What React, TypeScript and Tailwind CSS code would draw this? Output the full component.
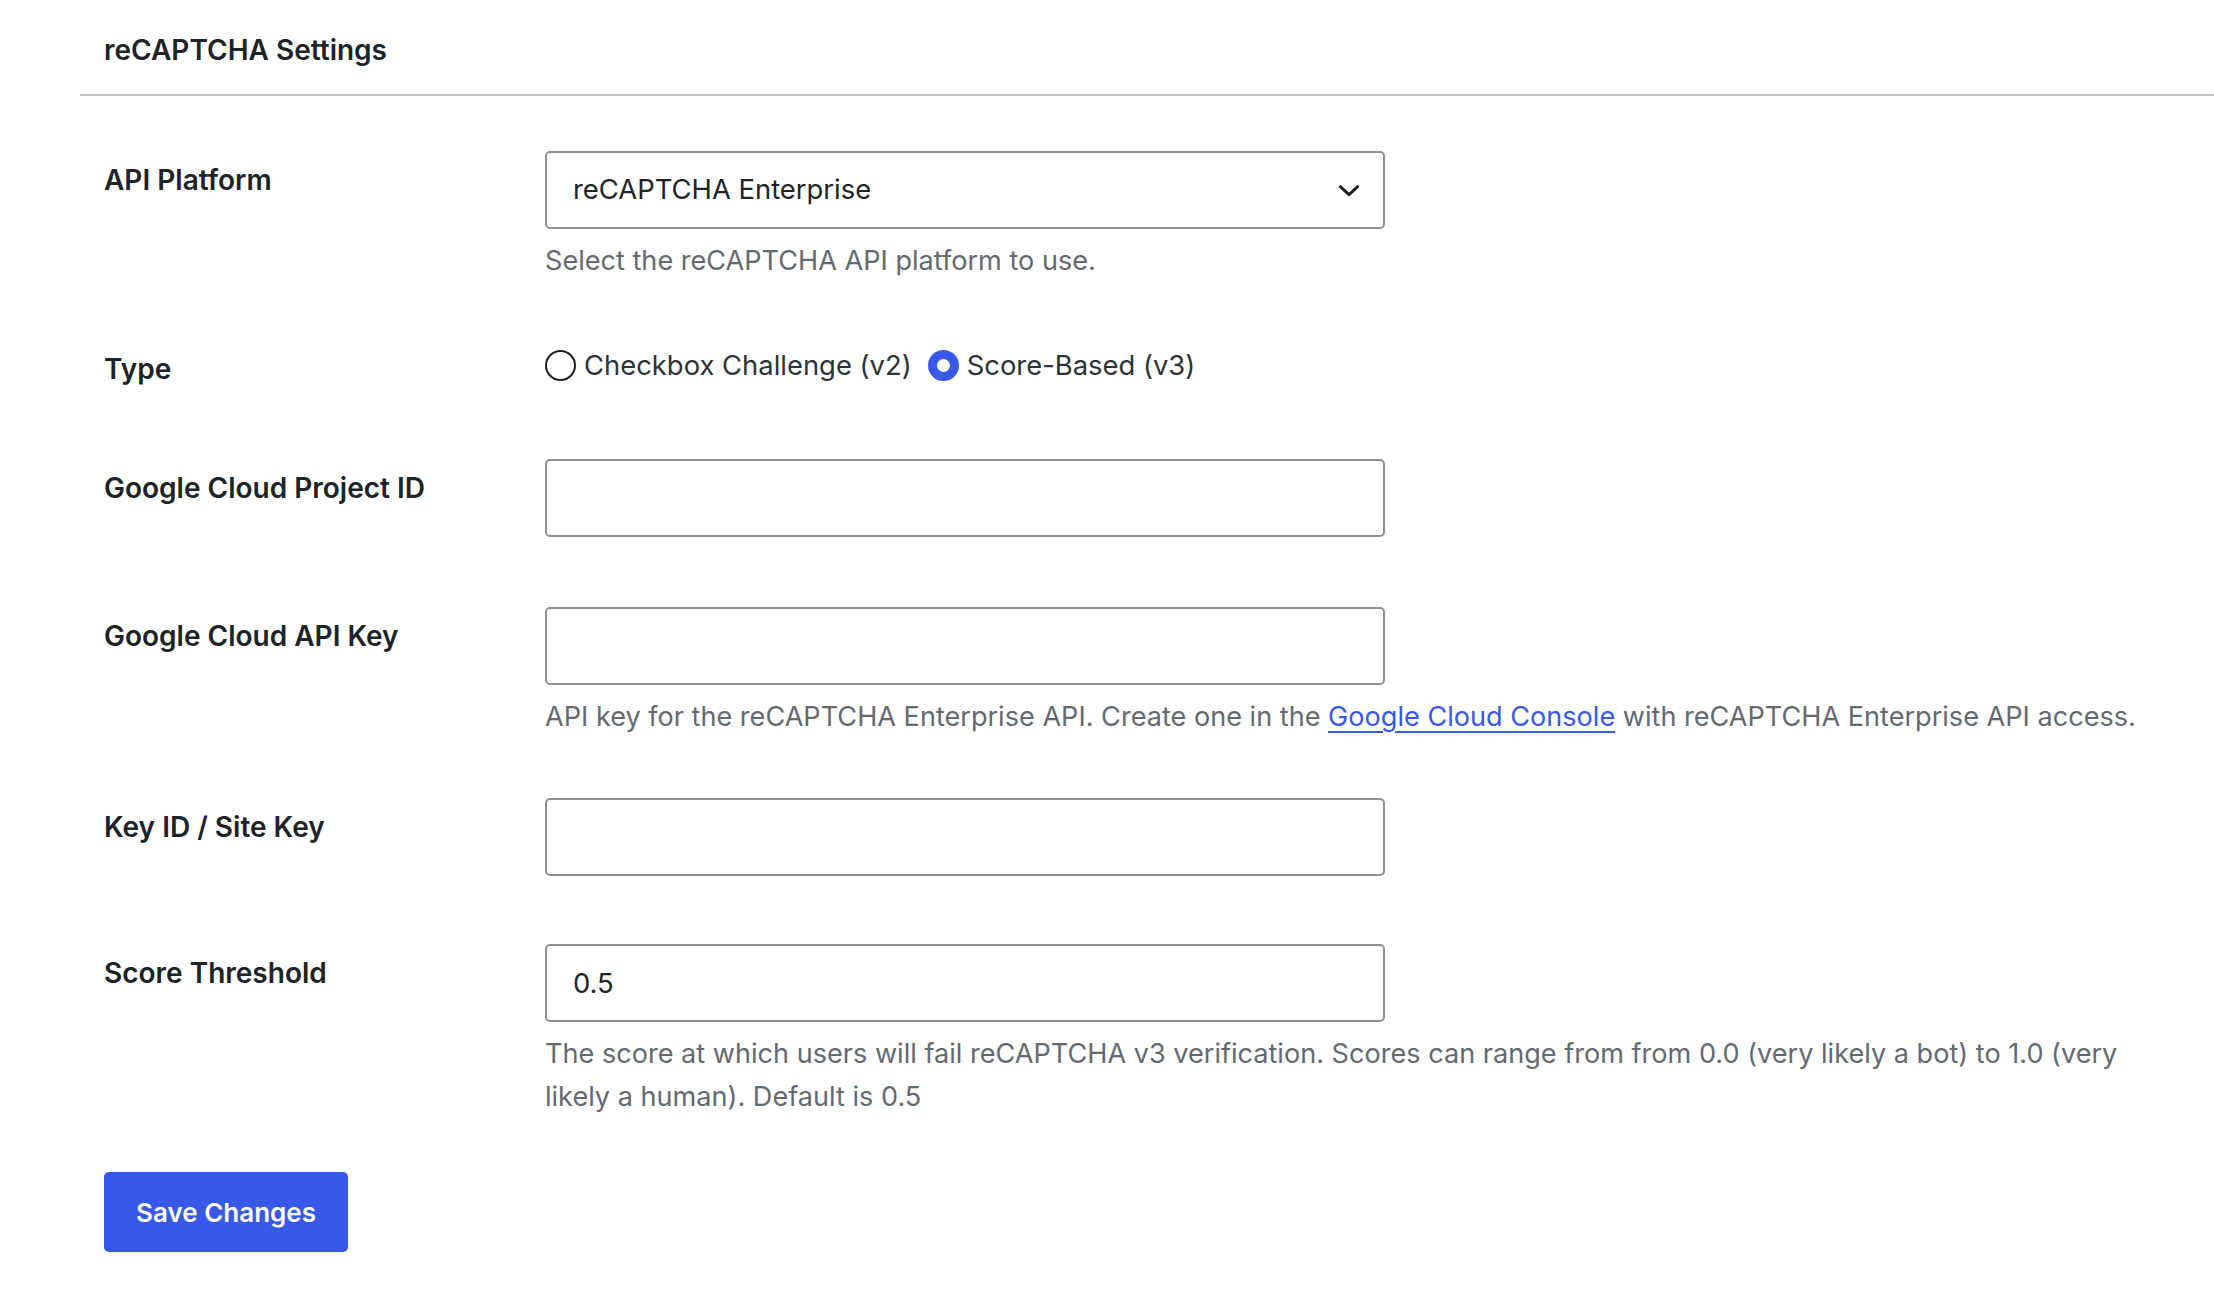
import { useState } from "react";

const font = { fontFamily: "Inter, 'Noto Sans', sans-serif" };

function Row({
  label,
  labelPad = "pt-[9px]",
  className = "",
  children,
}: {
  label: string;
  labelPad?: string;
  className?: string;
  children: React.ReactNode;
}) {
  return (
    <div className={`flex items-start ${className}`}>
      <div
        className={`w-[441px] shrink-0 text-[28px] leading-[40px] font-semibold text-[#1d2327] ${labelPad}`}
      >
        {label}
      </div>
      <div className="min-w-0 flex-1">{children}</div>
    </div>
  );
}

function TextInput({ value = "" }: { value?: string }) {
  return (
    <input
      type="text"
      defaultValue={value}
      className="block h-[78px] w-[840px] rounded-[5px] border-2 border-[#8c8f94] bg-white px-[26px] text-[27.4px] text-[#1d2327] outline-none"
    />
  );
}

function Help({ children }: { children: React.ReactNode }) {
  return (
    <p className="mt-[10px] text-[27.1px] leading-[43px] text-[#646970]">
      {children}
    </p>
  );
}

function Radio({
  checked,
  label,
  onClick,
}: {
  checked: boolean;
  label: string;
  onClick: () => void;
}) {
  return (
    <label
      className="flex cursor-pointer items-center gap-[8px]"
      onClick={onClick}
    >
      {checked ? (
        <span className="flex h-[31px] w-[31px] items-center justify-center rounded-full bg-[#3858e9]">
          <span className="h-[13px] w-[13px] rounded-full bg-white" />
        </span>
      ) : (
        <span className="h-[31px] w-[31px] rounded-full border-2 border-[#1e1e1e] bg-white" />
      )}
      <span className="text-[27.4px] leading-[42px] text-[#2c3338]">{label}</span>
    </label>
  );
}

export default function App() {
  const [type, setType] = useState<"v2" | "v3">("v3");

  return (
    <div className="min-h-screen bg-white" style={font}>
      <div className="ml-[80px]">
        <div className="border-b-2 border-[#c3c4c7] pl-[24px] pt-[30px] pb-[24px]">
          <h2 className="text-[28px] leading-[40px] font-semibold text-[#1d2327]">
            reCAPTCHA Settings
          </h2>
        </div>

        <div className="pl-[24px] pr-[50px]">
          <Row label="API Platform" className="mt-[55px]">
            <div className="relative w-[840px]">
              <select
                defaultValue="enterprise"
                className="block h-[78px] w-full appearance-none rounded-[5px] border-2 border-[#8c8f94] bg-white pl-[26px] pr-[70px] text-[27.4px] text-[#1d2327] outline-none"
              >
                <option value="free">reCAPTCHA (Free)</option>
                <option value="enterprise">reCAPTCHA Enterprise</option>
              </select>
              <svg
                className="pointer-events-none absolute right-[20px] top-1/2 h-[32px] w-[32px] -translate-y-1/2"
                viewBox="0 0 24 24"
                fill="none"
                stroke="#1e1e1e"
                strokeWidth="2.2"
                strokeLinecap="round"
                strokeLinejoin="round"
              >
                <path d="M5.5 9.5l6.5 6 6.5-6" />
              </svg>
            </div>
            <Help>Select the reCAPTCHA API platform to use.</Help>
          </Row>

          <Row label="Type" labelPad="pt-[5px]" className="mt-[62px]">
            <div className="flex items-center gap-[16px]">
              <Radio
                checked={type === "v2"}
                label="Checkbox Challenge (v2)"
                onClick={() => setType("v2")}
              />
              <Radio
                checked={type === "v3"}
                label="Score-Based (v3)"
                onClick={() => setType("v3")}
              />
            </div>
          </Row>

          <Row label="Google Cloud Project ID" className="mt-[70px]">
            <TextInput />
          </Row>

          <Row label="Google Cloud API Key" className="mt-[70px]">
            <TextInput />
            <Help>
              API key for the reCAPTCHA Enterprise API. Create one in the{" "}
              <a href="#" className="text-[#3858e9] underline underline-offset-[5px]">
                Google Cloud Console
              </a>{" "}
              with reCAPTCHA Enterprise API access.
            </Help>
          </Row>

          <Row label="Key ID / Site Key" className="mt-[60px]">
            <TextInput />
          </Row>

          <Row label="Score Threshold" className="mt-[68px]">
            <TextInput value="0.5" />
            <Help>
              The score at which users will fail reCAPTCHA v3 verification.
              Scores can range from from 0.0 (very likely a bot) to 1.0 (very
              likely a human). Default is 0.5
            </Help>
          </Row>

          <button className="mt-[54px] h-[80px] w-[244px] rounded-[5px] bg-[#3858e9] text-[26px] font-semibold text-white">
            Save Changes
          </button>
        </div>
      </div>
    </div>
  );
}
